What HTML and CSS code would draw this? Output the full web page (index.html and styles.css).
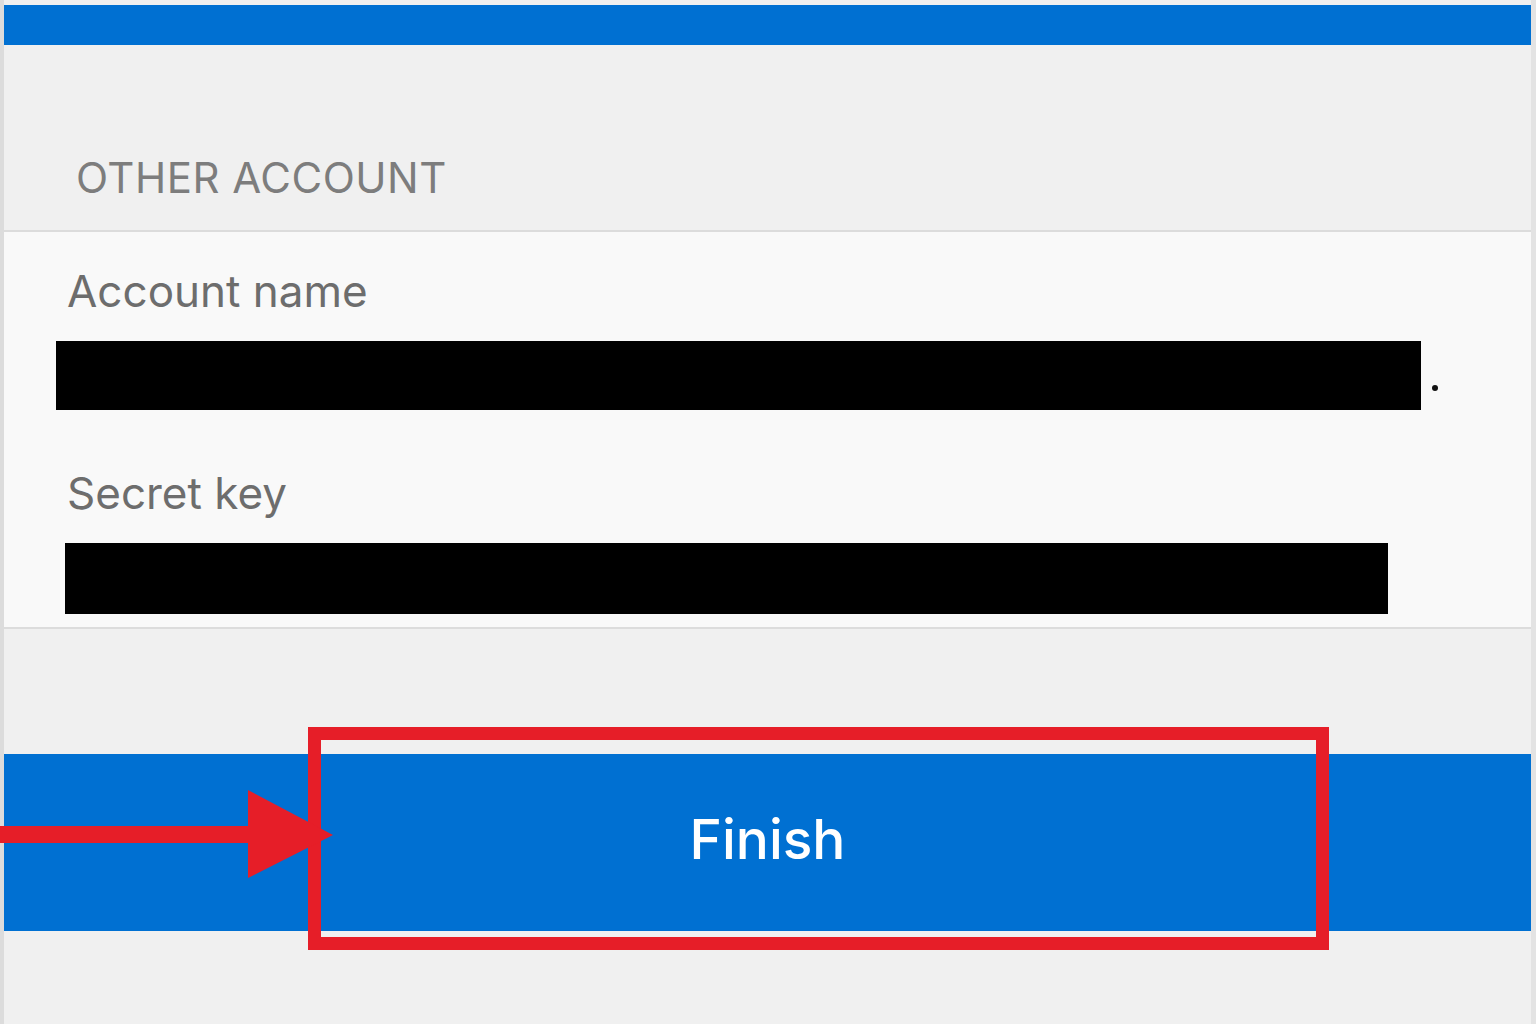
FILE: index.html
```html
<!DOCTYPE html>
<html lang="en">
<head>
<meta charset="utf-8">
<title>Other account</title>
<link rel="stylesheet" href="styles.css">
</head>
<body>
<div class="screen">
  <div class="topbar"></div>
  <div class="section-head">
    <span class="section-title">OTHER ACCOUNT</span>
  </div>
  <div class="card">
    <div class="field field-name">
      <div class="label">Account name</div>
      <div class="value-row">
        <div class="redact redact-name"></div>
        <span class="dot"></span>
      </div>
    </div>
    <div class="field field-key">
      <div class="label">Secret key</div>
      <div class="value-row">
        <div class="redact redact-key"></div>
      </div>
    </div>
  </div>
  <div class="spacer"></div>
  <div class="finish-bar">
    <span class="finish-text">Finish</span>
  </div>
  <div class="bottom"></div>

  <div class="highlight"></div>
  <svg class="arrow" width="340" height="100" viewBox="0 0 340 100" aria-hidden="true">
    <rect x="0" y="36" width="256" height="17" fill="#e61e28"/>
    <polygon points="248,0 333,45 248,88" fill="#e61e28"/>
  </svg>
</div>
</body>
</html>
```
FILE: styles.css
```css
* { box-sizing: border-box; }
html, body { margin: 0; padding: 0; }
body {
  background: #efefef;
  font-family: "Inter", "Liberation Sans", Arial, sans-serif;
}
.screen {
  position: relative;
  width: 1536px;
  height: 1024px;
  overflow: hidden;
  background: linear-gradient(to right, #dcdcdc 0, #dcdcdc 4px, #f0f0f0 4px, #f0f0f0 1531px, #e3e3e3 1531px);
  padding: 5px 5px 0 4px;
  display: flex;
  flex-direction: column;
}
.topbar {
  height: 40px;
  background: #0070d2;
  flex: none;
}
.section-head {
  height: 185px;
  display: flex;
  align-items: flex-end;
  padding: 0 0 31px 72px;
  flex: none;
}
.section-title {
  font-size: 42px;
  color: #7d7d7d;
  letter-spacing: 0.5px;
  line-height: 1;
}
.card {
  background: #f9f9f9;
  border-top: 2px solid #dcdcdc;
  border-bottom: 2px solid #dcdcdc;
  height: 399px;
  flex: none;
  padding-top: 37px;
}
.field { padding-left: 63px; }
.label {
  font-size: 44px;
  color: #6d6d6d;
  line-height: 1;
}
.value-row {
  display: flex;
  align-items: center;
}
.field-name .value-row { margin-top: 28px; margin-left: -11px; }
.field-key { margin-top: 61px; }
.field-key .value-row { margin-top: 28px; margin-left: -2px; }
.redact { background: #000; height: 69px; }
.redact-name { width: 1365px; }
.redact-key { width: 1323px; height: 71px; }
.dot {
  width: 6px; height: 6px; border-radius: 50%;
  background: #111;
  margin-left: 11px;
  margin-top: 24px;
}
.spacer { height: 125px; flex: none; }
.finish-bar {
  height: 177px;
  background: #0070d2;
  display: flex;
  align-items: center;
  justify-content: center;
  flex: none;
}
.finish-text {
  color: #fff;
  font-size: 55px;
  font-weight: 500;
  line-height: 1;
  margin-left: 0;
  margin-bottom: 6px;
}
.bottom { flex: 1; }
.highlight {
  position: absolute;
  left: 308px;
  top: 727px;
  width: 1021px;
  height: 223px;
  border: 13px solid #e61e28;
}
.arrow {
  position: absolute;
  left: 0;
  top: 790px;
}
```
